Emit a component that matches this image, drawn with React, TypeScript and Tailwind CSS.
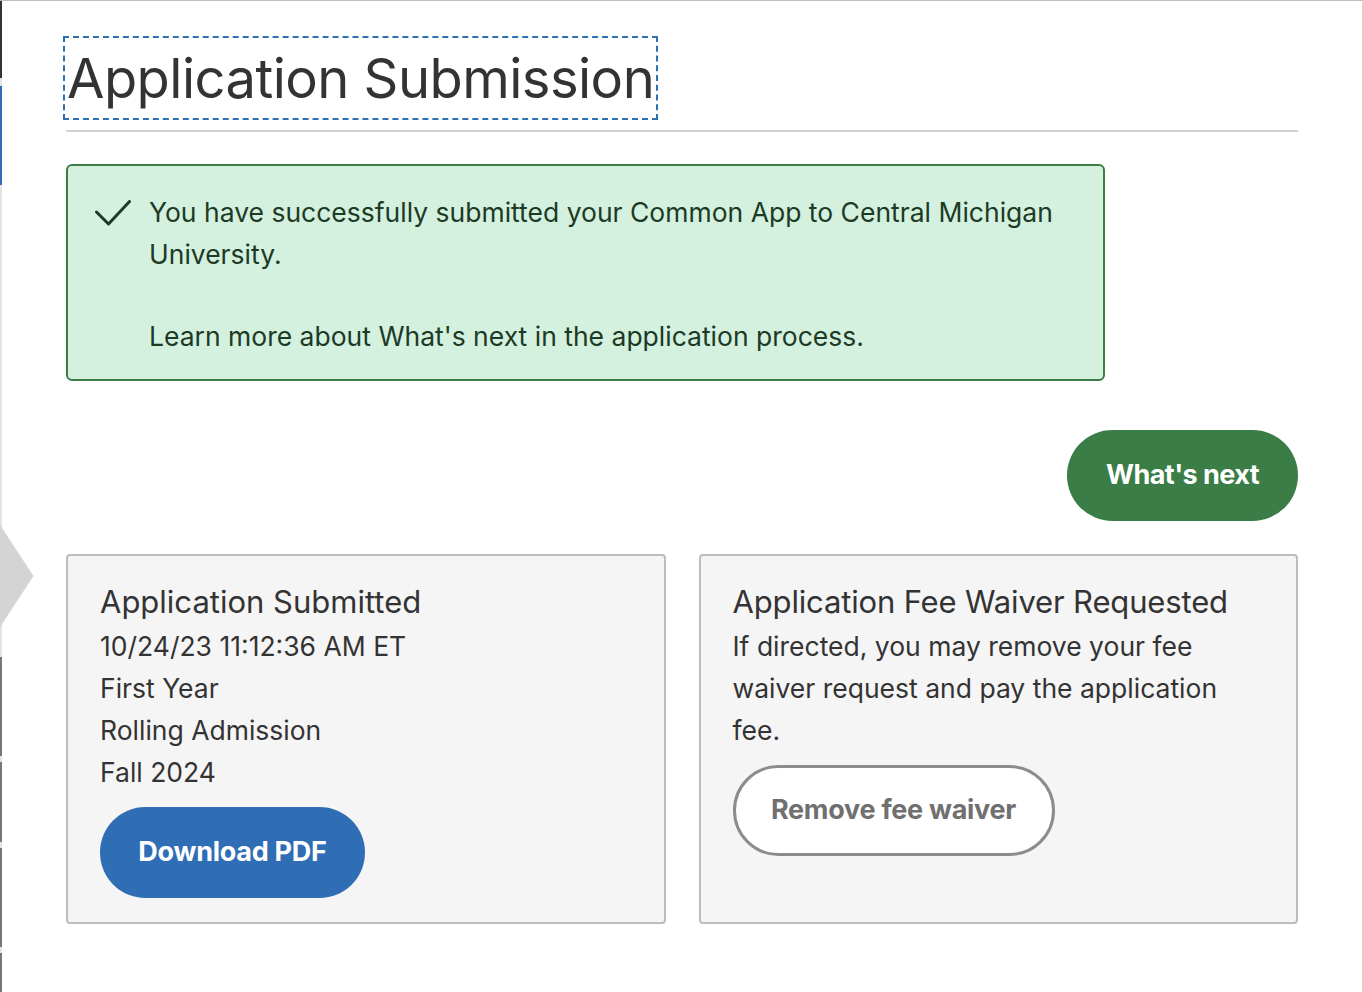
import React from "react";

function Check() {
  return (
    <svg width="36" height="26" viewBox="0 0 36 26" fill="none" className="shrink-0">
      <polyline points="1.5,12 13.5,24 34.5,1.5" stroke="#1e3a26" strokeWidth="3" strokeLinecap="round" strokeLinejoin="round" fill="none" />
    </svg>
  );
}

export default function App() {
  return (
    <div className="relative min-h-[992px] w-full bg-white font-['Inter',sans-serif] text-[#333] border-t border-[#bdbdbd] flex">
      {/* left progress strip */}
      <div className="w-[2px] shrink-0 bg-[#e4e4e4] flex flex-col">
        <div className="h-[77px] bg-[#333]" />
        <div className="h-[8px]" />
        <div className="h-[99px] bg-[#2f6db5]" />
        <div className="h-[472px]" />
        <div className="h-[99px] bg-[#777]" />
        <div className="h-[6px]" />
        <div className="h-[80px] bg-[#777]" />
        <div className="h-[6px]" />
        <div className="h-[99px] bg-[#777]" />
        <div className="h-[6px]" />
        <div className="flex-1 bg-[#777]" />
      </div>
      <svg className="absolute left-0 top-[524px]" width="34" height="102" viewBox="0 0 34 102">
        <polygon points="0,0 33.5,51 0,102" fill="#d4d4d4" />
      </svg>

      <main className="flex-1 pl-[64px] pr-[64px] pt-[39px]">
        <h1 className="inline-block text-[54.3px] leading-[76px] font-normal tracking-[-0.01em] text-[#333] outline-2 outline-dashed outline-[#2e70b4] outline-offset-[2px] ml-[1px]">
          Application Submission
        </h1>
        <div className="mt-[14px] h-[2px] bg-[#d0d0d0]" />

        <div className="mt-[32px] w-[1039px] rounded-[6px] border-2 border-[#3b7d46] bg-[#d4f0de] pl-[27px] pr-[20px] pt-[25px] pb-[22px] flex items-start gap-[18px] text-[#1d3a25]">
          <div className="pt-[9px]">
            <Check />
          </div>
          <div className="text-[26.5px] leading-[42px]">
            <p>You have successfully submitted your Common App to Central Michigan University.</p>
            <p className="mt-[40px]">Learn more about What's next in the application process.</p>
          </div>
        </div>

        <div className="mt-[49px] flex justify-end">
          <button className="h-[91px] w-[231px] rounded-full bg-[#3a7d47] text-white text-[27px] font-bold tracking-[-0.02em]">
            What's next
          </button>
        </div>

        <div className="mt-[33px] grid grid-cols-2 gap-[33px]">
          <div className="rounded-[4px] border-2 border-[#bdbdbd] bg-[#f5f5f5] px-[32px] pt-[23px] pb-[24px]">
            <h2 className="text-[31px] leading-[46px] font-normal text-[#333]">Application Submitted</h2>
            <div className="text-[26.5px] leading-[42px]">
              <p>10/24/23 11:12:36 AM ET</p>
              <p>First Year</p>
              <p>Rolling Admission</p>
              <p>Fall 2024</p>
            </div>
            <button className="mt-[14px] h-[91px] w-[265px] rounded-full bg-[#2f6db5] text-white text-[27px] font-bold tracking-[-0.01em]">
              Download PDF
            </button>
          </div>
          <div className="rounded-[4px] border-2 border-[#bdbdbd] bg-[#f5f5f5] px-[32px] pt-[23px] pb-[24px]">
            <h2 className="text-[31px] leading-[46px] font-normal tracking-[-0.005em] text-[#333]">Application Fee Waiver Requested</h2>
            <p className="text-[26.5px] leading-[42px] max-w-[500px]">
              If directed, you may remove your fee waiver request and pay the application fee.
            </p>
            <button className="mt-[14px] h-[91px] w-[322px] rounded-full border-[3px] border-[#8c8c8c] bg-white text-[#707070] text-[27px] font-bold tracking-[-0.01em]">
              Remove fee waiver
            </button>
          </div>
        </div>
      </main>
    </div>
  );
}
